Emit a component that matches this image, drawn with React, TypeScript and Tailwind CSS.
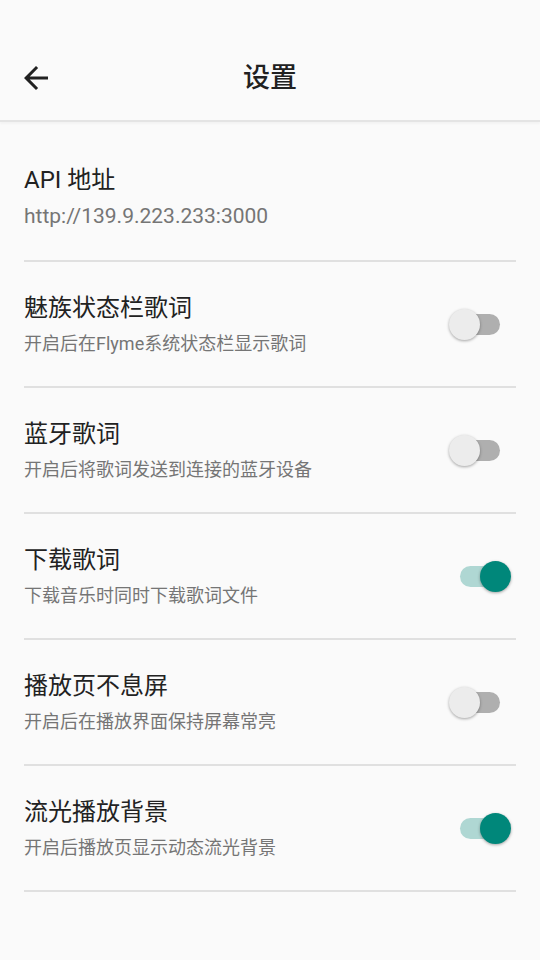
import { useState } from "react"

type Item = {
  title: string
  desc: string
  on: boolean
}

const ITEMS: Item[] = [
  { title: "魅族状态栏歌词", desc: "开启后在Flyme系统状态栏显示歌词", on: false },
  { title: "蓝牙歌词", desc: "开启后将歌词发送到连接的蓝牙设备", on: false },
  { title: "下载歌词", desc: "下载音乐时同时下载歌词文件", on: true },
  { title: "播放页不息屏", desc: "开启后在播放界面保持屏幕常亮", on: false },
  { title: "流光播放背景", desc: "开启后播放页显示动态流光背景", on: true },
]

const Switch = ({ on, onClick }: { on: boolean; onClick: () => void }) => (
  <button onClick={onClick} className="relative mr-[5px] h-[31px] w-[62px] shrink-0">
    <span
      className={
        "absolute left-[11px] top-[5px] h-[21px] w-[40px] rounded-full " +
        (on ? "bg-[#afd7d3]" : "bg-[#afafaf]")
      }
    />
    <span
      className={
        "absolute top-0 h-[31px] w-[31px] rounded-full shadow-[0_1px_3px_rgba(0,0,0,0.35)] " +
        (on ? "right-0 bg-[#00877a]" : "left-0 bg-[#ececec]")
      }
    />
  </button>
)

export default function App() {
  const [items, setItems] = useState(ITEMS)

  const toggle = (idx: number) =>
    setItems((prev) => prev.map((it, i) => (i === idx ? { ...it, on: !it.on } : it)))

  return (
    <div className="min-h-[960px] w-full bg-[#fafafa] font-[Roboto,'Noto_Sans_CJK_SC',sans-serif]">
      {/* Toolbar */}
      <div className="border-b-2 border-[#e4e4e4] pt-[36px] shadow-[0_2px_2px_rgba(0,0,0,0.03)]">
        <div className="relative flex h-[84px] items-center justify-center">
          <button className="absolute left-[18px] top-[24px] flex h-[36px] w-[36px] items-center justify-center">
            <svg width="36" height="36" viewBox="0 0 24 24" fill="#212121">
              <path d="M20 11H7.83l5.59-5.59L12 4l-8 8 8 8 1.41-1.41L7.83 13H20v-2z" />
            </svg>
          </button>
          <h1 className="text-[27px] font-medium leading-[36px] text-[#212121]">设置</h1>
        </div>
      </div>

      {/* Lista */}
      <div className="px-6">
        <div className="pb-[32px] pt-[42px]">
          <p className="text-[24px] leading-[32px] text-[#222222]">API 地址</p>
          <p className="mt-2 text-[21px] leading-[24px] text-[#757575]">http://139.9.223.233:3000</p>
        </div>
        <div className="h-[2px] bg-[#e0e0e0]" />

        {items.map((it, idx) => (
          <div key={it.title}>
            <div className="flex items-center justify-between py-[30px]">
              <div>
                <p className="text-[24px] leading-[32px] text-[#222222]">{it.title}</p>
                <p className="mt-2 text-[18px] leading-[24px] text-[#757575]">{it.desc}</p>
              </div>
              <Switch on={it.on} onClick={() => toggle(idx)} />
            </div>
            <div className="h-[2px] bg-[#e0e0e0]" />
          </div>
        ))}
      </div>
    </div>
  )
}
